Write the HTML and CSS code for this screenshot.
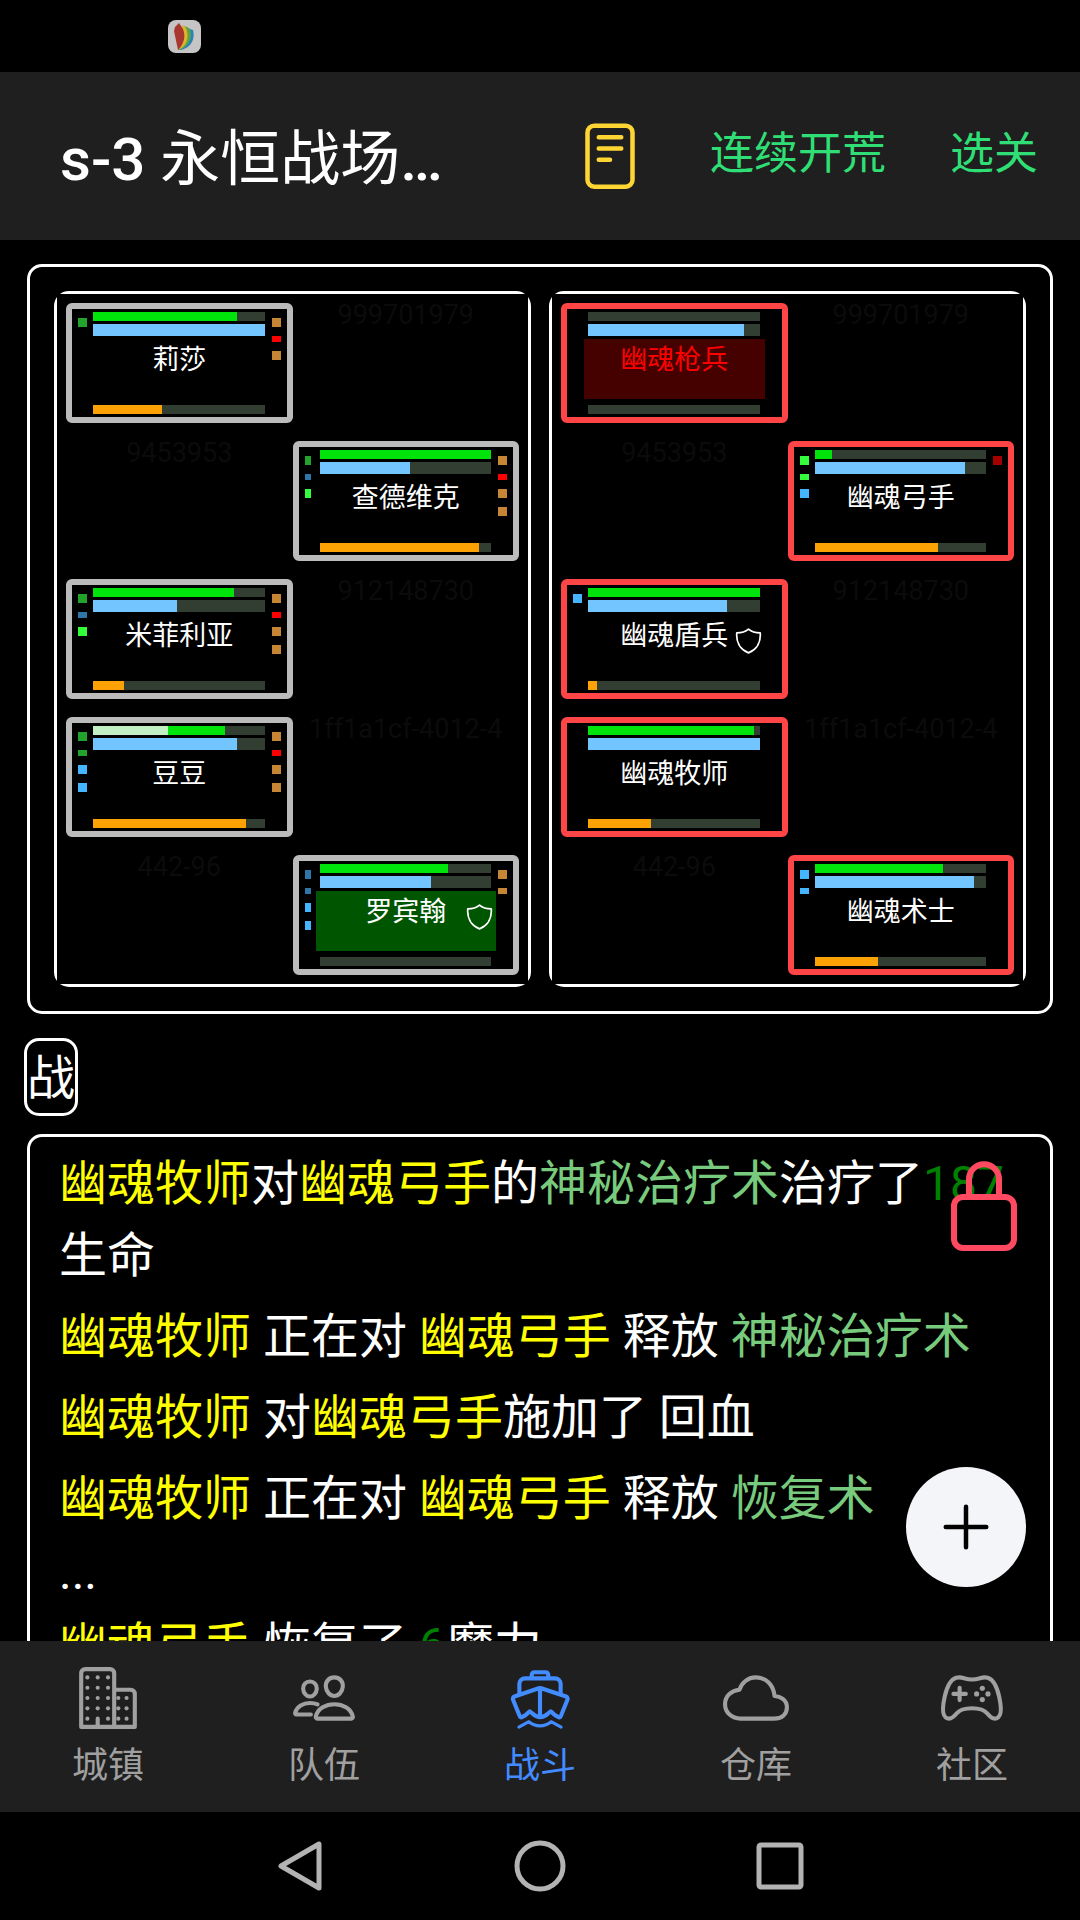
FILE: index.html
```html
<!DOCTYPE html>
<html lang="zh-CN">
<head>
  <meta charset="UTF-8" />
  <meta name="viewport" content="width=device-width, initial-scale=1.0"/>
  <title>永恒战场</title>
  <link rel="stylesheet" href="styles.css">
</head>
<body>
  <svg class="sprite" aria-hidden="true">
    <symbol id="shield" viewBox="0 0 24 24">
      <path d="M12 1 Q16 4.500 22.800 4.500 C23.500 12 20.500 19.500 12 23 C3.500 19.500 0.500 12 1.200 4.500 Q8 4.500 12 1z" fill="none" stroke="currentColor" stroke-width="1.600" stroke-linejoin="round"/>
    </symbol>
  </svg>

  <div class="status-bar">
    <svg class="app-badge" viewBox="0 0 33 33">
      <rect width="33" height="33" rx="8" fill="#c6c4c4"/>
      <path d="M10 30 C20 30 28 22 25 10 L22 9 L18 7z" fill="#2585b5"/>
      <path d="M10 30 C20 28 25 19 22 9 L19 7 L15 6z" fill="#5fa345"/>
      <path d="M10 30 C18 27 22 18 18 8 L14 5z" fill="#dfb52b"/>
      <path d="M10 30 L6 11 L7 7 L11 3 L15 9 C18 16 16 24 10 30z" fill="#a8382f"/>
    </svg>
  </div>

  <header class="toolbar">
    <h1 class="title">s-3 <span>永恒战场</span>…</h1>
    <button class="icon-btn" aria-label="日志">
      <svg viewBox="0 0 512 512">
        <rect x="96" y="40" width="320" height="434" rx="48"/>
        <path d="M176 122h160M176 202h160M176 282h80"/>
      </svg>
    </button>
    <button class="text-btn">连续开荒</button>
    <button class="text-btn">选关</button>
  </header>

  <main class="content">
    <section class="arena">
      <div class="team">
        <div class="grid">
          <div class="unit">
            <div class="pips"><i class="buff"></i></div>
            <div class="stats">
              <div class="bar hp"><b style="width: 84%"></b></div>
              <div class="bar mp"><b style="width: 100%"></b></div>
              <div class="name">莉莎</div>
              <div class="bar sp"><b style="width: 40%"></b></div>
            </div>
            <div class="pips"><i class="gear"></i><i class="debuff"></i><i class="gear"></i></div>
          </div>
          <div class="empty">999701979</div>

          <div class="empty">9453953</div>
          <div class="unit">
            <div class="pips narrow"><i class="buff"></i><i class="water"></i><i class="heal"></i></div>
            <div class="stats">
              <div class="bar hp"><b style="width: 100%"></b></div>
              <div class="bar mp"><b style="width: 53%"></b></div>
              <div class="name">查德维克</div>
              <div class="bar sp"><b style="width: 93%"></b></div>
            </div>
            <div class="pips"><i class="gear"></i><i class="debuff"></i><i class="gear"></i><i class="gear"></i></div>
          </div>

          <div class="unit">
            <div class="pips"><i class="buff"></i><i class="water"></i><i class="heal"></i></div>
            <div class="stats">
              <div class="bar hp"><b style="width: 82%"></b></div>
              <div class="bar mp"><b style="width: 49%"></b></div>
              <div class="name">米菲利亚</div>
              <div class="bar sp"><b style="width: 18%"></b></div>
            </div>
            <div class="pips"><i class="gear"></i><i class="debuff"></i><i class="gear"></i><i class="gear"></i></div>
          </div>
          <div class="empty">912148730</div>

          <div class="unit">
            <div class="pips"><i class="buff"></i><i class="buff"></i><i class="ice"></i><i class="ice"></i></div>
            <div class="stats">
              <div class="bar hp"><b class="absorb" style="width: 44%"></b><b style="width: 33%"></b></div>
              <div class="bar mp"><b style="width: 84%"></b></div>
              <div class="name">豆豆</div>
              <div class="bar sp"><b style="width: 89%"></b></div>
            </div>
            <div class="pips"><i class="gear"></i><i class="debuff"></i><i class="gear"></i><i class="gear"></i></div>
          </div>
          <div class="empty">1ff1a1cf-4012-4</div>

          <div class="empty">442-96</div>
          <div class="unit">
            <div class="pips narrow"><i class="water"></i><i class="water"></i><i class="ice"></i><i class="ice"></i></div>
            <div class="stats">
              <div class="bar hp"><b style="width: 75%"></b></div>
              <div class="bar mp"><b style="width: 65%"></b></div>
              <div class="name acting">罗宾翰<svg class="guard"><use href="#shield"/></svg></div>
              <div class="bar sp"><b style="width: 0%"></b></div>
            </div>
            <div class="pips"><i class="gear"></i><i class="gear"></i></div>
          </div>
        </div>
      </div>

      <div class="team enemy">
        <div class="grid">
          <div class="unit">
            <div class="pips"></div>
            <div class="stats">
              <div class="bar hp"><b style="width: 0%"></b></div>
              <div class="bar mp"><b style="width: 91%"></b></div>
              <div class="name dead">幽魂枪兵</div>
              <div class="bar sp"><b style="width: 0%"></b></div>
            </div>
            <div class="pips"></div>
          </div>
          <div class="empty">999701979</div>

          <div class="empty">9453953</div>
          <div class="unit">
            <div class="pips"><i class="heal"></i><i class="heal"></i><i class="ice"></i></div>
            <div class="stats">
              <div class="bar hp"><b style="width: 10%"></b></div>
              <div class="bar mp"><b style="width: 88%"></b></div>
              <div class="name">幽魂弓手</div>
              <div class="bar sp"><b style="width: 72%"></b></div>
            </div>
            <div class="pips"><i class="bleed"></i></div>
          </div>

          <div class="unit">
            <div class="pips"><i class="ice"></i></div>
            <div class="stats">
              <div class="bar hp"><b style="width: 100%"></b></div>
              <div class="bar mp"><b style="width: 81%"></b></div>
              <div class="name">幽魂盾兵<svg class="guard"><use href="#shield"/></svg></div>
              <div class="bar sp"><b style="width: 5%"></b></div>
            </div>
            <div class="pips"></div>
          </div>
          <div class="empty">912148730</div>

          <div class="unit">
            <div class="pips"></div>
            <div class="stats">
              <div class="bar hp"><b style="width: 97%"></b></div>
              <div class="bar mp"><b style="width: 100%"></b></div>
              <div class="name">幽魂牧师</div>
              <div class="bar sp"><b style="width: 37%"></b></div>
            </div>
            <div class="pips"></div>
          </div>
          <div class="empty">1ff1a1cf-4012-4</div>

          <div class="empty">442-96</div>
          <div class="unit">
            <div class="pips"><i class="ice"></i><i class="ice"></i></div>
            <div class="stats">
              <div class="bar hp"><b style="width: 75%"></b></div>
              <div class="bar mp"><b style="width: 93%"></b></div>
              <div class="name">幽魂术士</div>
              <div class="bar sp"><b style="width: 37%"></b></div>
            </div>
            <div class="pips"></div>
          </div>
        </div>
      </div>
    </section>

    <button class="filter">战</button>

    <section class="log">
      <p><em>幽魂牧师</em>对<em>幽魂弓手</em>的<span class="skill">神秘治疗术</span>治疗了<span class="num">187</span>生命</p>
      <p><em>幽魂牧师</em> 正在对 <em>幽魂弓手</em> 释放 <span class="skill">神秘治疗术</span></p>
      <p><em>幽魂牧师</em> 对<em>幽魂弓手</em>施加了 回血</p>
      <p><em>幽魂牧师</em> 正在对 <em>幽魂弓手</em> 释放 <span class="skill">恢复术</span></p>
      <p class="turn">...</p>
      <p><em>幽魂弓手</em> 恢复了 <span class="num">6</span>魔力</p>
      <button class="lock" aria-label="锁定">
        <svg viewBox="0 0 512 512">
          <path d="M336 208v-95a80 80 0 00-160 0v95"/>
          <rect x="96" y="208" width="320" height="272" rx="48"/>
        </svg>
      </button>
    </section>

    <button class="fab" aria-label="添加">
      <svg viewBox="0 0 512 512"><path d="M256 112v288M400 256H112"/></svg>
    </button>
  </main>

  <nav class="tabs">
    <a class="tab" href="#town">
      <svg viewBox="0 0 512 512">
        <path d="M176 416v64M80 32h192a32 32 0 0132 32v416H48V64a32 32 0 0132-32zM304 192h128a32 32 0 0132 32v256H304z"/>
        <g class="dots">
          <circle cx="96" cy="96" r="16"/><circle cx="176" cy="96" r="16"/><circle cx="256" cy="96" r="16"/>
          <circle cx="96" cy="176" r="16"/><circle cx="176" cy="176" r="16"/><circle cx="256" cy="176" r="16"/>
          <circle cx="96" cy="256" r="16"/><circle cx="176" cy="256" r="16"/><circle cx="256" cy="256" r="16"/>
          <circle cx="96" cy="336" r="16"/><circle cx="176" cy="336" r="16"/><circle cx="256" cy="336" r="16"/>
          <circle cx="96" cy="416" r="16"/><circle cx="256" cy="416" r="16"/>
          <circle cx="336" cy="256" r="16"/><circle cx="400" cy="256" r="16"/>
          <circle cx="336" cy="336" r="16"/><circle cx="400" cy="336" r="16"/>
          <circle cx="336" cy="416" r="16"/><circle cx="400" cy="416" r="16"/>
        </g>
      </svg>
      <span>城镇</span>
    </a>
    <a class="tab" href="#team">
      <svg viewBox="0 0 512 512">
        <path d="M402 168c-2.930 40.670-33.100 72-66 72s-63.120-31.320-66-72c-3-42.310 26.370-72 66-72s69 30.460 66 72z"/>
        <path d="M336 304c-65.170 0-127.840 32.370-143.540 95.410-2.080 8.340 3.150 16.590 11.720 16.590h263.650c8.570 0 13.770-8.250 11.720-16.590C463.850 335.360 401.180 304 336 304z"/>
        <path d="M200 185.940c-2.340 32.480-26.720 58.060-53 58.060s-50.700-25.570-53-58.060C91.610 152.150 115.340 128 147 128s55.390 24.770 53 57.940z"/>
        <path d="M206 306c-18.050-8.270-37.930-11.450-59-11.450-52 0-102.100 25.850-114.650 76.200-1.650 6.660 2.530 13.250 9.370 13.250H154"/>
      </svg>
      <span>队伍</span>
    </a>
    <a class="tab active" href="#battle">
      <svg viewBox="0 0 512 512">
        <path d="M96 226V148a44 44 0 0144-44h232a44 44 0 0144 44v78M192 98V76a20 20 0 0120-20h88a20 20 0 0120 20v22"/>
        <path d="M256 182v222M246 180L58 244a20 20 0 00-11 26l52 128q6 14 19 6l26-15q9-6 15-14l18-16 18 15q30 30 63 30t63-30l18-15 18 16q6 8 15 14l26 15q13 8 19-6l52-128a20 20 0 00-11-26L266 180q-10-3-20 0z"/>
        <path class="wave" d="M92 482l78-42q38 32 86 32t86-32l78 42"/>
      </svg>
      <span>战斗</span>
    </a>
    <a class="tab" href="#storage">
      <svg viewBox="0 0 512 512">
        <path d="M400 240c-8.890-89.540-71-144-144-144-69 0-113.440 48.200-128 96-60 6-112 43.590-112 112 0 66 54 112 120 112h260c55 0 100-27.440 100-88 0-59.820-53-85.760-96-88z"/>
      </svg>
      <span>仓库</span>
    </a>
    <a class="tab" href="#community">
      <svg viewBox="0 0 512 512">
        <path d="M467.510 248.830c-18.400-83.180-45.690-136.240-89.430-149.170A91.500 91.500 0 00352 96c-26.890 0-48.110 16-96 16s-69.150-16-96-16a99.090 99.090 0 00-27.200 3.660C89 112.590 61.940 165.700 43.330 248.830c-19 84.910-15.560 152 21.580 164.880 26 9 49.250-9.610 71.270-37 25-31.200 55.790-40.800 119.820-40.800s93.620 9.600 118.660 40.800c22 27.410 46.110 45.790 71.420 37.160 41.020-14.010 40.440-79.130 21.430-165.040z"/>
        <path d="M160 176v96M208 224h-96"/>
        <g class="dots">
          <circle cx="292" cy="224" r="20"/><circle cx="336" cy="268" r="20"/>
          <circle cx="336" cy="180" r="20"/><circle cx="380" cy="224" r="20"/>
        </g>
      </svg>
      <span>社区</span>
    </a>
  </nav>

  <div class="system-nav">
    <button aria-label="返回"><svg viewBox="0 0 60 60"><path d="M49 8v44L11 30z"/></svg></button>
    <button aria-label="主页"><svg viewBox="0 0 60 60"><circle cx="30" cy="30" r="23"/></svg></button>
    <button aria-label="最近"><svg viewBox="0 0 60 60"><rect x="9" y="9" width="42" height="42" rx="2"/></svg></button>
  </div>
</body>
</html>
```
FILE: styles.css
```css
* {
  box-sizing: border-box;
}

body {
  margin: 0;
  height: 100vh;
  display: flex;
  flex-direction: column;
  overflow: hidden;
  background-color: #000;
  color: #fff;
  font-family: Roboto, 'Noto Sans CJK SC', sans-serif;
}

button {
  padding: 0;
  border: none;
  background: none;
  color: inherit;
  font-family: inherit;
  cursor: pointer;
}

svg {
  display: block;
}

.sprite {
  display: none;
}

/* top */
.status-bar {
  height: 72px;
  padding: 20px 168px;
}

.app-badge {
  width: 33px;
  height: 33px;
}

.toolbar {
  display: flex;
  align-items: center;
  gap: 64px;
  height: 168px;
  padding: 0 42px 0 60px;
  background-color: #1f1f1f;
}

.title {
  flex: 1;
  margin: 0;
  padding-top: 8px;
  font-size: 60px;
  font-weight: 500;
  line-height: 84px;
  white-space: nowrap;
}

.title span {
  font-weight: 400;
}

.icon-btn svg {
  width: 72px;
  height: 72px;
  fill: none;
  stroke: #ffd534;
  stroke-width: 32;
  stroke-linecap: round;
}

.text-btn {
  padding-bottom: 4px;
  color: #2fdf75;
  font-size: 44px;
  line-height: 64px;
}

/* battlefield */
.content {
  position: relative;
  flex: 1;
  min-height: 0;
  overflow: hidden;
  padding: 24px 27px 0;
}

.arena {
  display: flex;
  gap: 18px;
  padding: 24px;
  border: 3px solid #fff;
  border-radius: 15px;
}

.team {
  flex: 1;
  border: 3px solid #fff;
  border-radius: 15px;
}

.grid {
  display: grid;
  grid-template-columns: 1fr 1fr;
  row-gap: 18px;
  padding: 9px;
  background-color: #000;
}

.empty {
  color: #0b0b0b;
  font-size: 27px;
  line-height: 24px;
  text-align: center;
  white-space: nowrap;
}

.unit {
  display: grid;
  grid-template-columns: 9px 1fr 9px;
  gap: 2px;
  height: 120px;
  padding: 3px 6px;
  border: 6px solid #bbb;
  border-radius: 6px;
}

.enemy .unit {
  border-color: #ff4545;
}

.pips {
  display: flex;
  flex-direction: column;
  gap: 9px;
  padding-top: 6px;
}

.pips i {
  height: 9px;
}

.pips i:nth-child(2) {
  height: 6px;
}

.narrow i {
  width: 6px;
}

.buff { background-color: #22a32c; }
.heal { background-color: #33ff3a; }
.water { background-color: #2e75a8; }
.ice { background-color: #45b5ff; }
.gear { background-color: #c78636; }
.debuff { background-color: #f00; }
.bleed { background-color: #a50000; }

.stats {
  display: flex;
  flex-direction: column;
  gap: 3px;
}

.bar {
  display: flex;
  height: 9px;
  margin: 0 5px 0 4px;
  background-color: #323e31;
}

.hp b { background-color: #00e30b; }
.hp .absorb { background-color: #c3efc5; }
.mp b { background-color: #73c5ff; }
.sp b { background-color: #fca204; }

.mp {
  height: 12px;
}

.sp {
  margin-top: auto;
}

.name {
  position: relative;
  height: 60px;
  font-size: 27px;
  line-height: 42px;
  text-align: center;
}

.acting {
  background-color: #050;
}

.dead {
  background-color: #450000;
  color: #f00;
}

.guard {
  position: absolute;
  top: 13px;
  right: 3px;
  width: 27px;
  height: 26px;
}

.filter {
  display: block;
  width: 54px;
  height: 78px;
  margin: 24px 0 18px -3px;
  padding-top: 3px;
  border: 3px solid #fff;
  border-radius: 15px;
  font-size: 48px;
  line-height: 69px;
}

/* battle log */
.log {
  position: relative;
  padding: 11px 29px;
  border: 3px solid #fff;
  border-radius: 15px;
  font-size: 48px;
  line-height: 72px;
}

.log p {
  margin: 0 0 9px;
}

.log .turn {
  line-height: 57px;
}

.log em {
  color: #ff0;
  font-style: normal;
}

.skill { color: #78ca7c; }
.num { color: #008000; }

.lock {
  position: absolute;
  top: 21px;
  right: 18px;
}

.lock svg {
  width: 96px;
  height: 96px;
  fill: none;
  stroke: #ff4961;
  stroke-width: 32;
  stroke-linecap: round;
}

.fab {
  position: absolute;
  right: 54px;
  bottom: 54px;
  display: flex;
  align-items: center;
  justify-content: center;
  width: 120px;
  height: 120px;
  border-radius: 50%;
  background-color: #f4f5f8;
}

.fab svg {
  width: 72px;
  height: 72px;
  stroke: #000;
  stroke-width: 32;
  stroke-linecap: round;
}

/* bottom */
.tabs {
  display: flex;
  height: 171px;
  background-color: #1f1f1f;
}

.tab {
  flex: 1;
  display: flex;
  flex-direction: column;
  align-items: center;
  gap: 11px;
  padding-top: 24px;
  color: #a0a0a0;
  font-size: 36px;
  line-height: 48px;
  text-decoration: none;
}

.tab.active {
  color: #428cff;
}

.tab svg {
  width: 66px;
  height: 66px;
  fill: none;
  stroke: currentColor;
  stroke-width: 32;
  stroke-linecap: round;
  stroke-linejoin: round;
}

.tab .dots {
  fill: currentColor;
  stroke: none;
}

.tab .wave {
  stroke-width: 24;
}

.system-nav {
  display: flex;
  align-items: center;
  justify-content: center;
  gap: 180px;
  height: 108px;
}

.system-nav svg {
  width: 60px;
  height: 60px;
  fill: none;
  stroke: #b3b3b3;
  stroke-width: 5;
  stroke-linejoin: round;
}
```
